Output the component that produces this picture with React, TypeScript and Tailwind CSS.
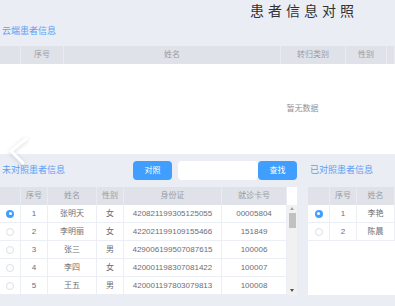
import React from "react";

const font = { fontFamily: '"Liberation Sans", "Noto Sans CJK SC", sans-serif' };

const unmatched = [
  { id: 1, name: "张明天", sex: "女", idCard: "420821199305125055", card: "00005804", checked: true },
  { id: 2, name: "李明丽", sex: "女", idCard: "422021199109155466", card: "151849" },
  { id: 3, name: "张三", sex: "男", idCard: "429006199507087615", card: "100006" },
  { id: 4, name: "李四", sex: "女", idCard: "420001198307081422", card: "100007" },
  { id: 5, name: "王五", sex: "男", idCard: "420001197803079813", card: "100008" },
];

const matched = [
  { id: 1, name: "李艳", checked: true },
  { id: 2, name: "陈晨" },
];

function Radio({ checked }: { checked?: boolean }) {
  return checked ? (
    <span className="w-[8px] h-[8px] rounded-full bg-[#409eff] flex items-center justify-center">
      <span className="w-[3px] h-[3px] rounded-full bg-white" />
    </span>
  ) : (
    <span className="w-[8px] h-[8px] rounded-full border border-[#dcdfe6] bg-white" />
  );
}

const th =
  "h-[18px] flex items-center justify-center text-[8px] text-[#9a9ca2] border-r border-[#e9ebf0] bg-[#dfe2e8]";
const td =
  "h-[18px] flex items-center justify-center text-[8px] text-[#6b6e75] border-r border-b border-[#ebeef5] bg-white whitespace-nowrap overflow-hidden";

export default function App() {
  return (
    <div
      className="w-[395px] h-[306px] bg-[#eaedf4] relative overflow-hidden"
      style={font}
    >
      {/* 标题 */}
      <div className="h-[24px] pl-[250px] pt-[3px]">
        <h1 className="text-[14px] leading-[16px] tracking-[4px] text-[#303133]">
          患者信息对照
        </h1>
      </div>
      <div className="h-[22px] pl-[2px] pt-[2px] text-[9px] leading-[11px] text-[#5a9ef5]">
        云端患者信息
      </div>

      {/* 云端表格 */}
      <div className="bg-white h-[108px]">
        <div className="grid grid-cols-[21px_43px_217px_65px_41px_8px]">
          <div className={th} />
          <div className={th}>序号</div>
          <div className={th}>姓名</div>
          <div className={th}>转归类别</div>
          <div className={th}>性别</div>
          <div className={th} />
        </div>
        <div className="h-[90px] flex items-center justify-center pl-[210px] text-[8px] text-[#909399]">
          暂无数据
        </div>
      </div>

      {/* 工具栏 */}
      <div className="mt-[7px] h-[19px] flex items-center">
        <div className="w-[133px] pl-[2px] text-[9px] text-[#5a9ef5]">未对照患者信息</div>
        <button className="w-[39px] h-[19px] rounded-sm bg-[#409eff] text-white text-[8px]">
          对照
        </button>
        <div className="ml-[6px] w-[80px] h-[19px] rounded-sm bg-white" />
        <button className="w-[39px] h-[19px] rounded-sm bg-[#409eff] text-white text-[8px]">
          查找
        </button>
        <div className="ml-[13px] text-[9px] text-[#5a9ef5]">已对照患者信息</div>
      </div>

      {/* 底部两张表 */}
      <div className="mt-[7px] flex">
        <div className="w-[297px] bg-white grid grid-cols-[21px_27px_49px_27px_98px_65px_10px] relative">
          <div className={th} />
          <div className={th}>序号</div>
          <div className={th}>姓名</div>
          <div className={th}>性别</div>
          <div className={th}>身份证</div>
          <div className={th}>就诊卡号</div>
          <div className="h-[18px] bg-white" />
          {unmatched.map((r) => (
            <React.Fragment key={r.id}>
              <div className={td}>
                <Radio checked={r.checked} />
              </div>
              <div className={td}>{r.id}</div>
              <div className={td}>{r.name}</div>
              <div className={td}>{r.sex}</div>
              <div className={td}>{r.idCard}</div>
              <div className={td}>{r.card}</div>
              <div className="h-[18px] bg-[#f1f1f1]" />
            </React.Fragment>
          ))}
          {/* 滚动条 */}
          <div className="absolute right-0 top-[18px] w-[10px] h-[90px] flex flex-col items-center">
            <span className="mt-[2px] w-0 h-0 border-x-[2px] border-x-transparent border-b-[3px] border-b-[#a3a3a3]" />
            <span className="mt-[3px] w-[7px] h-[15px] bg-[#c1c1c1]" />
            <span className="mt-auto mb-[3px] w-0 h-0 border-x-[2px] border-x-transparent border-t-[3px] border-t-[#505050]" />
          </div>
        </div>

        <div className="ml-[11px] flex-1 bg-white h-[108px]">
          <div className="grid grid-cols-[22px_27px_1fr]">
            <div className={th} />
            <div className={th}>序号</div>
            <div className={th}>姓名</div>
            {matched.map((r) => (
              <React.Fragment key={r.id}>
                <div className={td}>
                  <Radio checked={r.checked} />
                </div>
                <div className={td}>{r.id}</div>
                <div className={td}>{r.name}</div>
              </React.Fragment>
            ))}
          </div>
        </div>
      </div>

      {/* 轮播箭头 */}
      <svg
        className="absolute left-[7px] top-[136px] drop-shadow-sm"
        width="22"
        height="30"
        viewBox="0 0 22 30"
      >
        <polyline
          points="19,3 4,15 16,27"
          fill="none"
          stroke="white"
          strokeWidth="3"
          strokeLinecap="round"
          strokeLinejoin="round"
        />
      </svg>
    </div>
  );
}
